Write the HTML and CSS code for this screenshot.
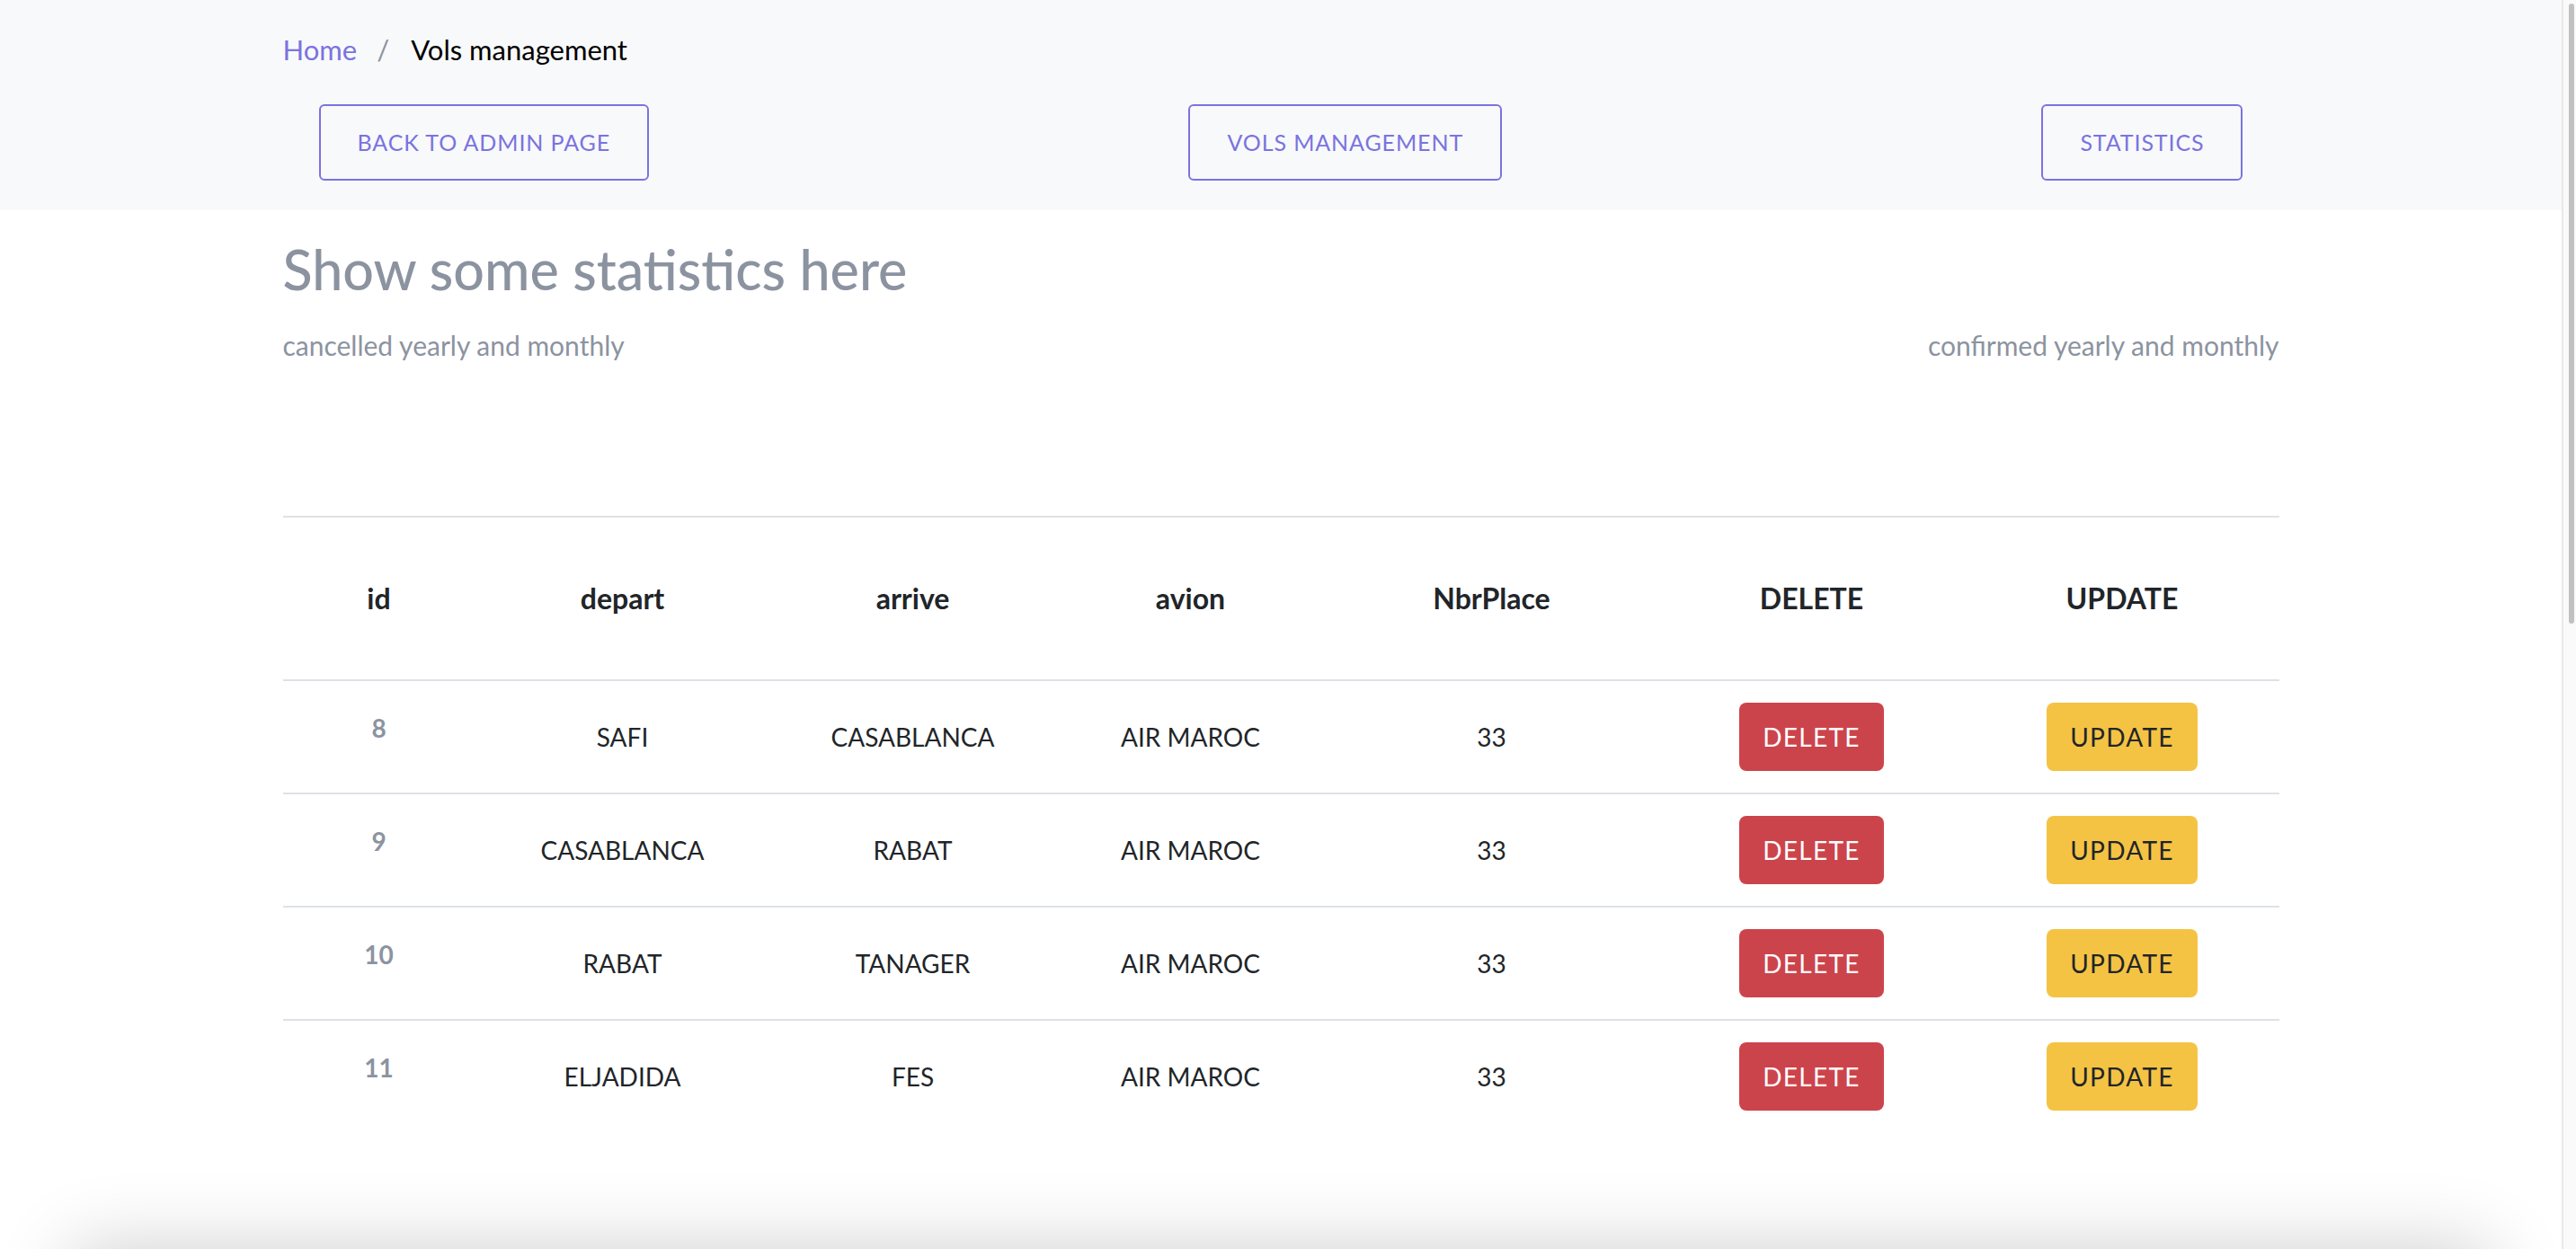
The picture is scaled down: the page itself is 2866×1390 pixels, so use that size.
FILE: index.html
```html
<!DOCTYPE html>
<html lang="en">
<head>
<meta charset="utf-8">
<title>Vols management</title>
<link rel="stylesheet" href="styles.css">
</head>
<body>
<header class="topbar">
  <div class="container">
    <nav class="breadcrumb">
      <a class="crumb-link" href="#">Home</a>
      <span class="crumb-sep">/</span>
      <span class="crumb-active">Vols management</span>
    </nav>
    <div class="nav-buttons">
      <a class="btn-outline" href="#">Back to admin page</a>
      <a class="btn-outline" href="#">Vols management</a>
      <a class="btn-outline" href="#">Statistics</a>
    </div>
  </div>
</header>

<main class="container content">
  <h2 class="title">Show some statistics here</h2>
  <div class="stats-row">
    <span>cancelled yearly and monthly</span>
    <span>confirmed yearly and monthly</span>
  </div>

  <table class="vols-table">
    <thead>
      <tr>
        <th class="col-id">id</th>
        <th class="col-depart">depart</th>
        <th class="col-arrive">arrive</th>
        <th class="col-avion">avion</th>
        <th class="col-places">NbrPlace</th>
        <th class="col-delete">DELETE</th>
        <th class="col-update">UPDATE</th>
      </tr>
    </thead>
    <tbody>
      <tr>
        <th class="row-id">8</th>
        <td>SAFI</td>
        <td>CASABLANCA</td>
        <td>AIR MAROC</td>
        <td>33</td>
        <td><button class="btn btn-danger">DELETE</button></td>
        <td><button class="btn btn-warning">UPDATE</button></td>
      </tr>
      <tr>
        <th class="row-id">9</th>
        <td>CASABLANCA</td>
        <td>RABAT</td>
        <td>AIR MAROC</td>
        <td>33</td>
        <td><button class="btn btn-danger">DELETE</button></td>
        <td><button class="btn btn-warning">UPDATE</button></td>
      </tr>
      <tr>
        <th class="row-id">10</th>
        <td>RABAT</td>
        <td>TANAGER</td>
        <td>AIR MAROC</td>
        <td>33</td>
        <td><button class="btn btn-danger">DELETE</button></td>
        <td><button class="btn btn-warning">UPDATE</button></td>
      </tr>
      <tr>
        <th class="row-id">11</th>
        <td>ELJADIDA</td>
        <td>FES</td>
        <td>AIR MAROC</td>
        <td>33</td>
        <td><button class="btn btn-danger">DELETE</button></td>
        <td><button class="btn btn-warning">UPDATE</button></td>
      </tr>
    </tbody>
  </table>
</main>

<footer class="footer"></footer>

<div class="scrollbar" aria-hidden="true">
  <div class="scrollbar-thumb"></div>
</div>
</body>
</html>
```

FILE: styles.css
```css
html {
  background: #fff;
}

body {
  margin: 0;
  padding-right: 16px;
  font-family: "Lato", "Open Sans", sans-serif;
  color: #212529;
  background: #fff;
}

.container {
  width: 2221px;
  margin: 0 auto;
}

/* ---------- top bar ---------- */
.topbar {
  background: #f8f9fa;
  padding-bottom: 33px;
}

.breadcrumb {
  display: flex;
  align-items: center;
  padding-top: 31px;
  font-size: 31px;
  line-height: 48px;
}

.crumb-link {
  color: #7a73e0;
  text-decoration: none;
}

.crumb-sep {
  color: #8c939e;
  margin: 0 24px 0 22px;
}

.crumb-active {
  color: #000;
}

.nav-buttons {
  display: flex;
  justify-content: space-between;
  margin-top: 37px;
  padding: 0 40px;
}

.btn-outline {
  display: inline-block;
  padding: 22px 41px;
  border: 2px solid #7a73e0;
  border-radius: 6px;
  color: #7a73e0;
  font-size: 25px;
  line-height: 37px;
  letter-spacing: 0.9px;
  text-transform: uppercase;
  text-decoration: none;
}

/* ---------- content ---------- */
.content {
  padding-bottom: 130px;
}

.title {
  margin: 27px 0 0;
  font-size: 61px;
  line-height: 77px;
  font-weight: 500;
  color: #8c93a0;
}

.stats-row {
  display: flex;
  justify-content: space-between;
  margin-top: 24px;
  font-size: 30px;
  line-height: 45px;
  color: #8c93a0;
}

/* ---------- table ---------- */
.vols-table {
  width: 100%;
  margin-top: 167px;
  table-layout: fixed;
  border-collapse: separate;
  border-spacing: 0;
  border-top: 2px solid #dee2e6;
  text-align: center;
}

.vols-table thead th {
  padding: 66px 0;
  font-size: 32px;
  line-height: 48px;
  font-weight: 700;
  color: #212529;
  border-bottom: 2px solid #dee2e6;
}

.col-id { width: 214px; }
.col-depart { width: 328px; }
.col-arrive { width: 318px; }
.col-avion { width: 300px; }
.col-places { width: 370px; }
.col-delete { width: 342px; }
.col-update { width: 349px; }

.vols-table tbody td,
.vols-table tbody th {
  padding: 24px 0;
  border-bottom: 2px solid #dee2e6;
  vertical-align: middle;
  font-size: 28px;
  line-height: 42px;
  color: #212529;
}

.vols-table tbody tr:last-child td,
.vols-table tbody tr:last-child th {
  border-bottom: none;
}

.vols-table tbody th.row-id {
  padding: 14px 0 34px;
  font-weight: 700;
  font-size: 28px;
  color: #8c93a0;
}

.btn {
  display: inline-flex;
  align-items: center;
  justify-content: center;
  height: 76px;
  padding: 0 26px;
  border: none;
  border-radius: 8px;
  font-family: inherit;
  font-size: 28px;
  letter-spacing: 1.3px;
  vertical-align: middle;
}

.btn-danger {
  background: #cc444b;
  color: #fff;
}

.btn-warning {
  background: #f5c344;
  color: #212529;
}

/* ---------- footer ---------- */
.footer {
  height: 1410px;
  margin: 0 80px;
  background: #fff;
  box-shadow: 0 0 80px rgba(0, 0, 0, 0.2);
}

/* ---------- window scrollbar (overlay) ---------- */
.scrollbar {
  position: fixed;
  top: 0;
  right: 0;
  width: 16px;
  height: 100vh;
  padding: 4px 2px 0 6px;
  box-sizing: border-box;
  background: #fafafa;
  border-left: 2px solid #e9e9e9;
}

.scrollbar-thumb {
  height: 690px;
  border-radius: 6px;
  background: #c1c1c1;
}
```
